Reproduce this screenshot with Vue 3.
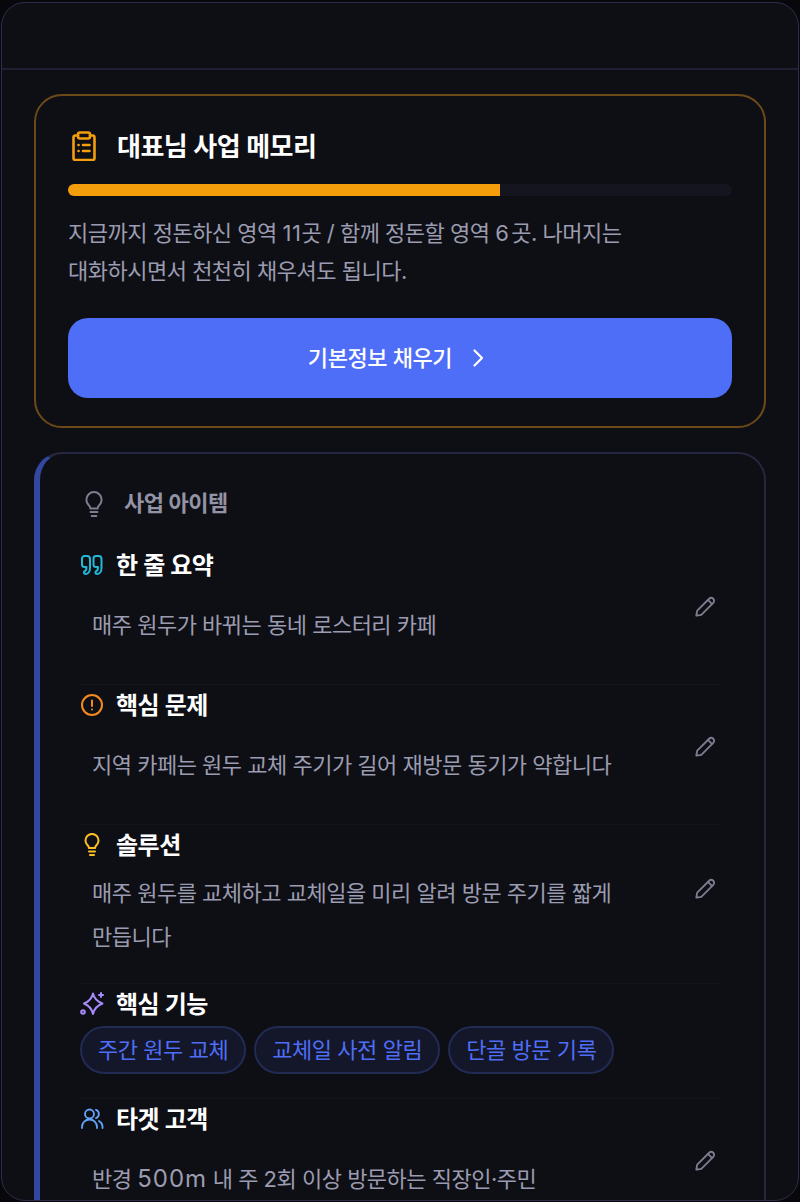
<script setup>
const rows = [
  { key: "summary", label: "한 줄 요약", parts: ["매주 원두가 바뀌는 동네 로스터리 카페"] },
  { key: "problem", label: "핵심 문제", parts: ["지역 카페는 원두 교체 주기가 길어 재방문 동기가 약합니다"] },
  { key: "solution", label: "솔루션", parts: ["매주 원두를 교체하고 교체일을 미리 알려 방문 주기를 짧게 만듭니다"] },
  { key: "features", label: "핵심 기능", chips: ["주간 원두 교체", "교체일 사전 알림", "단골 방문 기록"] },
  { key: "target", label: "타겟 고객", parts: ["반경 ", "500m", " 내 주 2회 이상 방문하는 직장인·주민"] },
]
</script>

<template>
  <div class="frame">
    <header class="topbar"></header>
    <main class="content">
      <section class="memory">
        <div class="memory-head">
          <svg class="clip" viewBox="0 0 30 30" fill="none" stroke="#f59e0b" stroke-width="2.6" stroke-linecap="round" stroke-linejoin="round">
            <path d="M9 4.500H6.500A2 2 0 0 0 4.500 6.500V27a2 2 0 0 0 2 2h17a2 2 0 0 0 2-2V6.500a2 2 0 0 0-2-2H21" />
            <rect x="9" y="1.500" width="12" height="6" rx="2" />
            <path d="M9.500 14h.1M14 14h6.500M9.500 20h.1M14 20h6.500" />
          </svg>
          <h2>대표님 사업 메모리</h2>
        </div>
        <div class="progress"><div class="progress-fill" style="width: 65%"></div></div>
        <p class="memory-text">지금까지 정돈하신 영역 <span class="n11">11</span>곳 / 함께 정돈할 영역 <span class="n6">6</span>곳. 나머지는 대화하시면서 천천히 채우셔도 됩니다.</p>
        <button class="cta">
          <span>기본정보 채우기</span>
          <svg viewBox="0 0 24 24" fill="none" stroke="#fff" stroke-width="2.2" stroke-linecap="round" stroke-linejoin="round"><path d="M8.500 4.500l7.500 7.500-7.500 7.500" /></svg>
        </button>
      </section>

      <section class="item-card">
        <div class="item-head">
          <svg class="head-icon" viewBox="0 0 24 24" fill="none" stroke="#7d7d8e" stroke-width="1.7" stroke-linecap="round" stroke-linejoin="round">
            <path d="M9 18h6M10 21.500h4M9 15c-.2-1.400-.9-2.300-1.800-3.200A6.500 6.500 0 1 1 16.800 11.800C15.900 12.700 15.200 13.600 15 15z" />
          </svg>
          <h3>사업 아이템</h3>
        </div>

        <div v-for="row in rows" :key="row.key" class="row" :class="'row-' + row.key">
          <div class="row-title">
            <svg v-if="row.key === 'summary'" viewBox="0 0 24 24" fill="none" stroke="#22b8d6" stroke-width="2" stroke-linecap="round" stroke-linejoin="round">
              <path d="M4.500 3H7a3 3 0 0 1 3 3v9c0 3.500-2 6-4.500 6-2 0-2-2.500-.5-3 1-.5 1.500-1.500 1.500-4h-2A2.500 2.500 0 0 1 2 11.500v-6A2.500 2.500 0 0 1 4.500 3z" />
              <path d="M16 3h2.500a3 3 0 0 1 3 3v9c0 3.500-2 6-4.500 6-2 0-2-2.500-.5-3 1-.5 1.500-1.500 1.500-4h-2a2.500 2.500 0 0 1-2.500-2.500v-6A2.500 2.500 0 0 1 16 3z" />
            </svg>
            <svg v-else-if="row.key === 'problem'" viewBox="0 0 24 24" fill="none" stroke="#f58a1f" stroke-width="2" stroke-linecap="round">
              <circle cx="12" cy="12" r="10" />
              <path d="M12 7.500v5.500M12 16.500v.1" />
            </svg>
            <svg v-else-if="row.key === 'solution'" viewBox="0 0 24 24" fill="none" stroke="#fbbf24" stroke-width="2" stroke-linecap="round" stroke-linejoin="round">
              <path d="M9 18.500h6M10 22h4M9 15c-.2-1.400-.9-2.300-1.800-3.200A6.500 6.500 0 1 1 16.800 11.800C15.900 12.700 15.200 13.600 15 15z" />
            </svg>
            <svg v-else-if="row.key === 'features'" viewBox="0 0 24 24" fill="none" stroke="#a78bfa" stroke-width="2" stroke-linecap="round" stroke-linejoin="round">
              <path d="M11.500 1.500Q13 8.500 21 11.500 13 14.500 11.500 22 10 14.500 2.500 11.500 10 8.500 11.500 1.500z" transform="translate(1.500 0)" />
              <path d="M21 1v4M19 3h4" />
              <circle cx="3" cy="20" r="1.800" />
            </svg>
            <svg v-else viewBox="0 0 24 24" fill="none" stroke="#60a5fa" stroke-width="1.800" stroke-linecap="round" stroke-linejoin="round">
              <circle cx="9.500" cy="7" r="4.500" />
              <path d="M2 21v-1a7.500 7.500 0 0 1 15 0v1M16 2.800a4.500 4.500 0 0 1 0 8.400M19 14a6.500 6.500 0 0 1 3.500 5.500V21" />
            </svg>
            <span>{{ row.label }}</span>
          </div>

          <div v-if="row.chips" class="chips">
            <span v-for="chip in row.chips" :key="chip" class="chip">{{ chip }}</span>
          </div>
          <div v-else class="row-body">
            <p class="value">
              <span v-for="part in row.parts" :key="part" :class="{ wide: part === '500m' }">{{ part }}</span>
            </p>
            <svg class="pencil" viewBox="0 0 24 24" fill="none" stroke="#7d7d8e" stroke-width="2" stroke-linecap="round" stroke-linejoin="round">
              <path d="M2.500 21.500l1-5.500L16.500 3a2.800 2.800 0 0 1 4.500 4.500L8 20.500z" />
              <path d="M15.500 4.500l4 4" />
            </svg>
          </div>
        </div>
      </section>
    </main>
  </div>
</template>

<style>
html, body {
  margin: 0;
  background: #08080c;
}
</style>

<style scoped>
.frame {
  box-sizing: border-box;
  height: 1199px;
  margin: 2px 1px 0;
  background: #0e0f15;
  border: 1px solid #2c2d48;
  border-radius: 24px;
  overflow: hidden;
  font-family: Inter, "Noto Sans CJK KR", sans-serif;
}

.topbar {
  height: 65px;
  border-bottom: 2px solid #1e1f30;
}

.content {
  padding: 24px 32px;
  display: flex;
  flex-direction: column;
  gap: 24px;
}

.memory {
  box-sizing: border-box;
  height: 334px;
  border: 2px solid #6b4a17;
  border-radius: 28px;
  padding: 32px;
}

.memory-head {
  display: flex;
  align-items: center;
  gap: 18px;
  height: 36px;
}

.clip {
  width: 30px;
  height: 30px;
  margin-left: 1px;
}

.memory-head h2 {
  margin: 0;
  padding-bottom: 4px;
  font-size: 26px;
  font-weight: 600;
  letter-spacing: -0.5px;
  color: #fff;
}

.progress {
  height: 12px;
  margin-top: 20px;
  background: #14151f;
  border-radius: 6px;
  overflow: hidden;
}

.progress-fill {
  height: 100%;
  background: #f59e0b;
}

.memory-text {
  margin: 18px 0 0;
  width: 580px;
  font-size: 22px;
  line-height: 38px;
  letter-spacing: -0.5px;
  word-break: keep-all;
  color: #9c9cb0;
}

.n11 {
  letter-spacing: 0.5px;
}

.n6 {
  letter-spacing: 2.5px;
}

.cta {
  display: flex;
  align-items: center;
  justify-content: center;
  gap: 14px;
  width: 100%;
  height: 80px;
  margin-top: 28px;
  border: 0;
  border-radius: 20px;
  background: #4f6ef7;
  color: #fff;
  font-family: inherit;
  font-size: 22px;
  font-weight: 500;
  letter-spacing: -0.4px;
}

.cta span {
  padding-bottom: 4px;
}

.cta svg {
  width: 24px;
  height: 24px;
  margin-right: 2px;
}

.item-card {
  border: 2px solid #252640;
  border-left: 6px solid #34479f;
  border-radius: 28px;
  padding: 24px 44px 0 40px;
}

.item-head {
  display: flex;
  align-items: center;
  gap: 16px;
  height: 50px;
  margin-bottom: 17px;
}

.head-icon {
  width: 28px;
  height: 28px;
  margin-top: 4px;
}

.item-head h3 {
  margin: 0;
  padding-bottom: 4px;
  font-size: 22px;
  font-weight: 600;
  letter-spacing: -0.5px;
  color: #9393a5;
}

.row {
  border-top: 1px solid #13141c;
}

.row-summary {
  border-top: 0;
}

.row-title {
  display: flex;
  align-items: center;
  gap: 12px;
  height: 40px;
  font-size: 24px;
  font-weight: 600;
  letter-spacing: -0.5px;
  color: #fff;
}

.row-title span {
  padding-bottom: 4px;
}

.row-title svg {
  width: 24px;
  height: 24px;
}

.row-body {
  position: relative;
  padding: 18px 0 37px 12px;
}

.row-solution .row-body {
  padding-top: 6px;
  padding-bottom: 24px;
}

.value {
  margin: 0;
  width: 540px;
  font-size: 22px;
  line-height: 44px;
  letter-spacing: -0.5px;
  word-break: keep-all;
  color: #9c9cb0;
}

.wide {
  font-size: 24px;
  letter-spacing: 1px;
}

.pencil {
  position: absolute;
  top: 11px;
  right: 4px;
  width: 22px;
  height: 22px;
}

.row-solution .pencil {
  top: 13px;
}

.chips {
  display: flex;
  gap: 8px;
  margin-top: 2px;
  padding-bottom: 24px;
}

.chip {
  box-sizing: border-box;
  height: 48px;
  line-height: 44px;
  padding: 0 16px;
  border: 2px solid #222b53;
  border-radius: 24px;
  background: #131729;
  color: #4f6ef7;
  font-size: 22px;
  letter-spacing: -0.45px;
}
</style>
